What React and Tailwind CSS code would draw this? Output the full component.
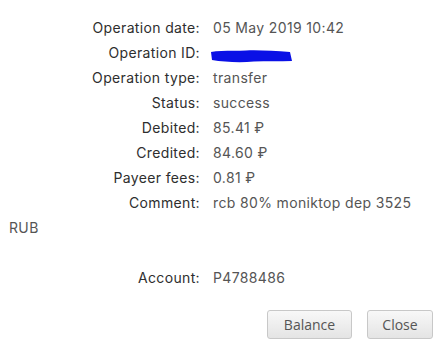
const rows = [
  { label: "Operation date:", value: "05 May 2019 10:42" },
  { label: "Operation ID:", value: null },
  { label: "Operation type:", value: "transfer" },
  { label: "Status:", value: "success" },
  { label: "Debited:", value: "85.41 ₽" },
  { label: "Credited:", value: "84.60 ₽" },
  { label: "Payeer fees:", value: "0.81 ₽" },
  { label: "Comment:", value: "rcb 80% moniktop dep 3525 RUB" },
];

function Scribble() {
  return (
    <svg width="84" height="14" viewBox="0 0 84 14" className="inline-block align-middle relative top-[2px] -ml-[3px]">
      <path
        d="M1 3 C10 1, 24 2, 36 1.5 C50 1, 64 2, 80 3 L82 12 C70 12.5, 56 12, 44 12.5 C30 14, 14 13, 2 11 Z"
        fill="#0a10e6"
      />
    </svg>
  );
}

export default function App() {
  return (
    <div
      className="w-[443px] h-[349px] bg-white pl-[9px] pr-[9px] pt-[15px] text-[14px] leading-[25px] tracking-[0.35px]"
      style={{ fontFamily: "Inter, 'DejaVu Sans', sans-serif" }}
    >
      {rows.map((r) => (
        <div key={r.label}>
          <span className="inline-block w-[191px] text-right text-[#2e2e2e]">{r.label}</span>
          <span className="ml-[13px] text-[#555]">{r.value === null ? <Scribble /> : r.value}</span>
        </div>
      ))}
      <div className="h-[25px]" />
      <div>
        <span className="inline-block w-[191px] text-right text-[#2e2e2e]">Account:</span>
        <span className="ml-[13px] text-[#555]">P4788486</span>
      </div>

      {/* buttons */}
      <div className="flex justify-end gap-[15px] mt-[20px] pr-[1px] tracking-normal">
        <button
          className="h-[29px] w-[85px] rounded-[3px] border border-[#c8c8c8] bg-gradient-to-b from-[#f8f8f8] to-[#e4e4e4] text-[#555] text-[14px]"
          style={{ fontFamily: "'Open Sans', sans-serif" }}
        >
          Balance
        </button>
        <button
          className="h-[29px] w-[66px] rounded-[3px] border border-[#c8c8c8] bg-gradient-to-b from-[#f8f8f8] to-[#e4e4e4] text-[#555] text-[14px]"
          style={{ fontFamily: "'Open Sans', sans-serif" }}
        >
          Close
        </button>
      </div>
    </div>
  );
}
